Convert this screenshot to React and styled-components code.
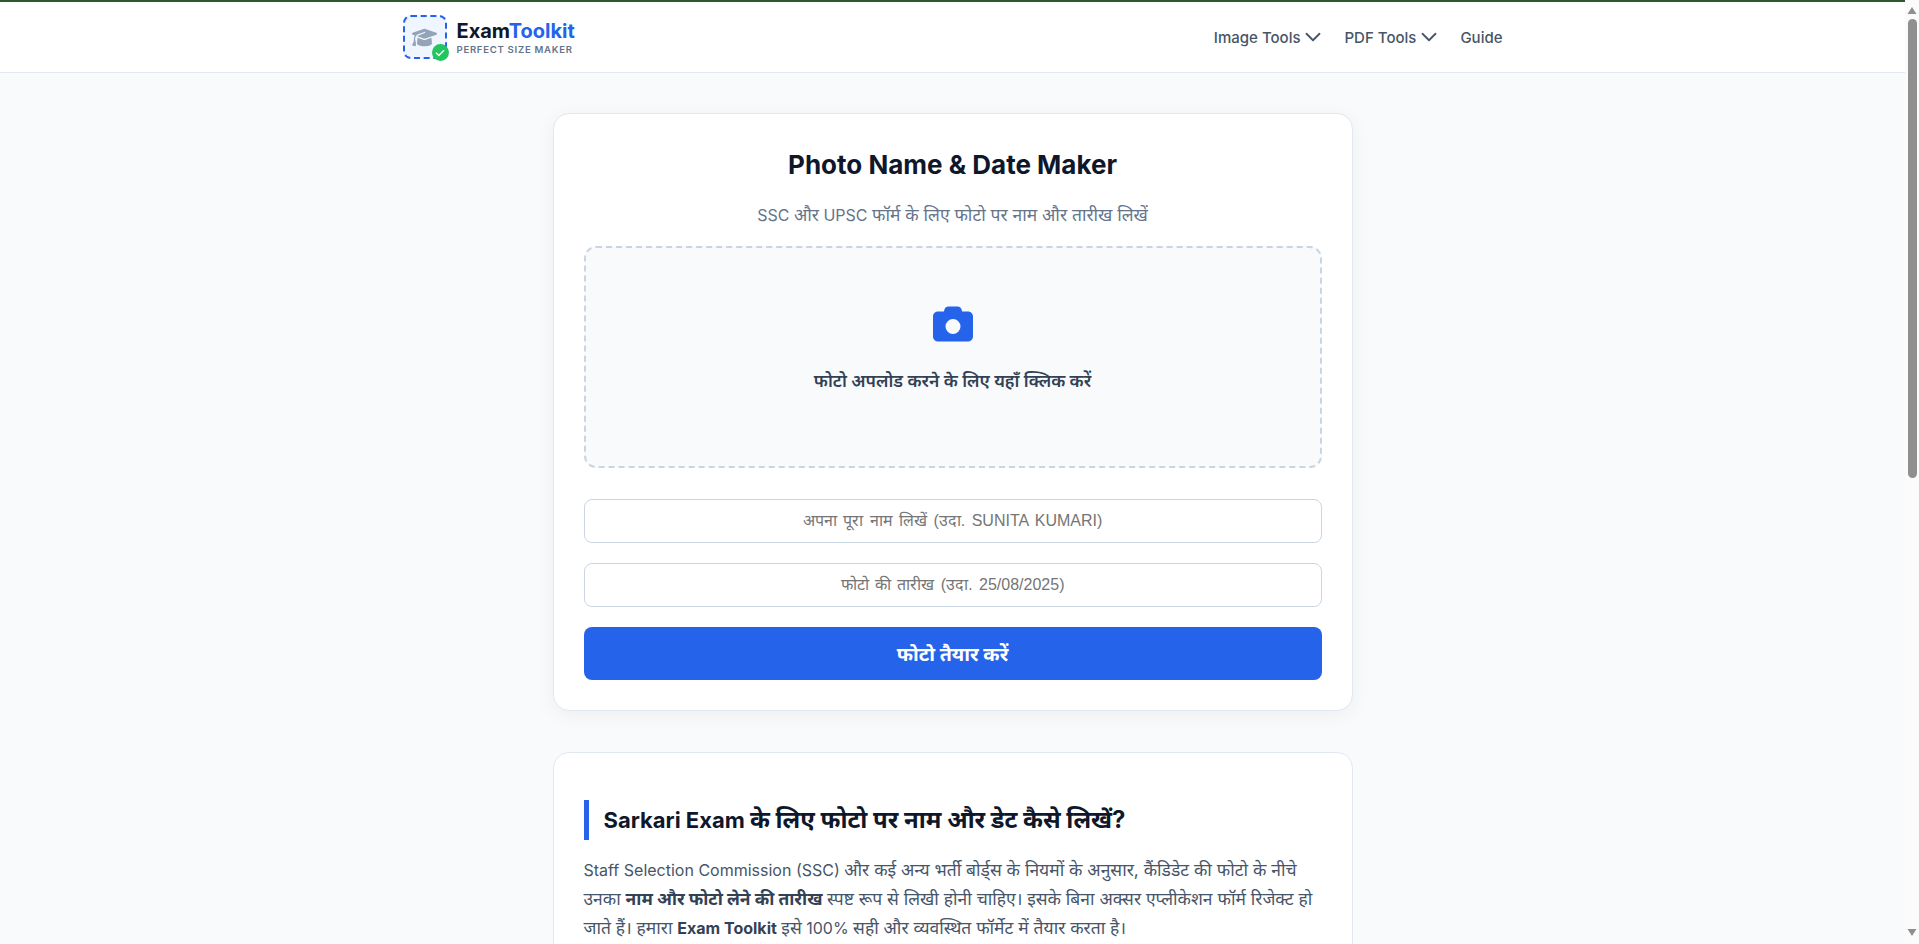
import React from "react";
import styled, { createGlobalStyle } from "styled-components";
import { FaCamera, FaCheck, FaGraduationCap } from "react-icons/fa6";
import { ChevronDown } from "lucide-react";

const GlobalStyle = createGlobalStyle`
  * { box-sizing: border-box; }
  body {
    margin: 0;
    padding-right: 14px;
    background: #f8fafc;
    font-family: Inter, "Noto Sans", sans-serif;
    color: #334155;
  }
`;

const App = () => {
  return (
    <>
      <GlobalStyle />
      <Header>
        <HeaderInner>
          <Brand>
            <LogoBox>
              <FaGraduationCap size={25} color="#94a3b8" />
              <LogoBadge>
                <FaCheck size={10} color="#fff" />
              </LogoBadge>
            </LogoBox>
            <BrandText>
              <BrandName>
                Exam<span>Toolkit</span>
              </BrandName>
              <BrandTag>PERFECT SIZE MAKER</BrandTag>
            </BrandText>
          </Brand>
          <Nav>
            <NavItem>
              Image Tools
              <NavChevron size={26} strokeWidth={1.7} />
            </NavItem>
            <NavItem>
              PDF Tools
              <NavChevron size={26} strokeWidth={1.7} />
            </NavItem>
            <NavItem>Guide</NavItem>
          </Nav>
        </HeaderInner>
      </Header>

      <Main>
        <ToolCard>
          <Title>Photo Name &amp; Date Maker</Title>
          <Subtitle>
            SSC <Hi>और</Hi> UPSC <Hi>फॉर्म के लिए फोटो पर नाम और तारीख लिखें</Hi>
          </Subtitle>
          <DropZone>
            <FaCamera size={40} color="#2563eb" />
            <DropLabel>
              <Hi>फोटो अपलोड करने के लिए यहाँ क्लिक करें</Hi>
            </DropLabel>
          </DropZone>
          <TextInput placeholder="अपना पूरा नाम लिखें (उदा. SUNITA KUMARI)" />
          <TextInput placeholder="फोटो की तारीख (उदा. 25/08/2025)" />
          <Submit>
            <Hi>फोटो तैयार करें</Hi>
          </Submit>
        </ToolCard>

        <ArticleCard>
          <ArticleHeading>
            Sarkari Exam <Hi>के लिए फोटो पर नाम और डेट कैसे लिखें?</Hi>
          </ArticleHeading>
          <Paragraph>
            Staff Selection Commission (SSC){" "}
            <Hi>और कई अन्य भर्ती बोर्ड्स के नियमों के अनुसार, कैंडिडेट की फोटो के नीचे उनका </Hi>
            <strong>
              <Hi>नाम और फोटो लेने की तारीख</Hi>
            </strong>{" "}
            <Hi>स्पष्ट रूप से लिखी होनी चाहिए। इसके बिना अक्सर एप्लीकेशन फॉर्म रिजेक्ट हो जाते हैं। हमारा </Hi>
            <strong>Exam Toolkit</strong> <Hi>इसे</Hi> 100%{" "}
            <Hi>सही और व्यवस्थित फॉर्मेट में तैयार करता है।</Hi>
          </Paragraph>
        </ArticleCard>
      </Main>

      <ScrollBar>
        <svg width="14" height="17" viewBox="0 0 14 17">
          <polygon points="2.5,14 11.5,14 7,7" fill="#8f8f8f" />
        </svg>
        <ScrollThumb />
        <svg width="14" height="17" viewBox="0 0 14 17">
          <polygon points="2.5,2 11.5,2 7,9" fill="#8f8f8f" />
        </svg>
      </ScrollBar>
    </>
  );
};

export default App;

// Devanagari falls back to a smaller face here, so it gets bumped on its own
const Hi = styled.span`
  font-size: 1.09em;
`;

// the browser runs without scrollbars, so this one sits over the page edge
const ScrollBar = styled.div`
  position: fixed;
  top: 0;
  right: 0;
  width: 14px;
  height: 100vh;
  background: #fbfbfb;
  display: flex;
  flex-direction: column;
  justify-content: space-between;
  align-items: center;
`;

const ScrollThumb = styled.div`
  width: 9px;
  height: 459px;
  margin: 2px 0 auto;
  border-radius: 5px;
  background: #8f8f8f;
`;

const Header = styled.header`
  height: 73px;
  background: #fff;
  border-top: 2px solid #2d5a2d;
  border-bottom: 1px solid #e2e8f0;
`;

const HeaderInner = styled.div`
  width: 1100px;
  height: 100%;
  margin: 0 auto;
  display: flex;
  align-items: center;
  justify-content: space-between;
`;

const Brand = styled.div`
  display: flex;
  align-items: center;
  gap: 10px;
`;

const LogoBox = styled.div`
  position: relative;
  width: 44px;
  height: 44px;
  border: 2px dashed #2563eb;
  border-radius: 8px;
  background: #eff6ff;
  display: flex;
  align-items: center;
  justify-content: center;
`;

const LogoBadge = styled.span`
  position: absolute;
  right: -4px;
  bottom: -4px;
  width: 17px;
  height: 17px;
  border-radius: 50%;
  background: #22c55e;
  display: flex;
  align-items: center;
  justify-content: center;
`;

const BrandText = styled.div`
  display: flex;
  flex-direction: column;
`;

const BrandName = styled.div`
  font-size: 20px;
  font-weight: 700;
  line-height: 24px;
  color: #0f172a;
  span {
    color: #2563eb;
  }
`;

const BrandTag = styled.div`
  font-size: 9.6px;
  font-weight: 600;
  line-height: 13px;
  letter-spacing: 0.7px;
  color: #64748b;
`;

const Nav = styled.nav`
  display: flex;
  align-items: center;
  gap: 19px;
`;

const NavItem = styled.a`
  display: flex;
  align-items: center;
  font-size: 15px;
  font-weight: 500;
  color: #475569;
`;

const NavChevron = styled(ChevronDown)`
  margin: 0 -0.5px;
`;

const Main = styled.main`
  width: 800px;
  margin: 0 auto;
  padding-top: 40px;
`;

const Card = styled.section`
  background: #fff;
  border: 1px solid #e2e8f0;
  border-radius: 16px;
  padding: 30px;
`;

const ToolCard = styled(Card)`
  height: 598px;
  padding-top: 35px;
  box-shadow: 0 4px 20px rgba(0, 0, 0, 0.05);
  display: flex;
  flex-direction: column;
`;

const Title = styled.h1`
  margin: 0;
  font-size: 26px;
  font-weight: 700;
  line-height: 32px;
  text-align: center;
  color: #0f172a;
`;

const Subtitle = styled.p`
  margin: 22px 0 19px;
  font-size: 16px;
  line-height: 24px;
  text-align: center;
  color: #64748b;
`;

const DropZone = styled.div`
  height: 224px;
  margin-bottom: 31px;
  border: 2px dashed #cbd5e1;
  border-radius: 12px;
  background: #f8fafc;
  display: flex;
  flex-direction: column;
  align-items: center;
  padding-top: 56px;
`;

const DropLabel = styled.div`
  margin-top: 25px;
  font-size: 16px;
  font-weight: 600;
  line-height: 24px;
  color: #334155;
`;

const TextInput = styled.input`
  display: block;
  flex: none;
  width: 100%;
  height: 44px;
  margin-bottom: 20px;
  border: 1px solid #cbd5e1;
  border-radius: 8px;
  background: #fff;
  font-family: "Liberation Sans", Arial, sans-serif;
  font-size: 16px;
  word-spacing: 2px;
  text-align: center;
`;

const Submit = styled.button`
  width: 100%;
  height: 54px;
  border: none;
  border-radius: 8px;
  background: #2563eb;
  color: #fff;
  font-family: Inter, "Noto Sans", sans-serif;
  font-size: 18px;
  font-weight: 700;
`;

const ArticleCard = styled(Card)`
  margin: 41px 0 40px;
  min-height: 1000px;
  padding-top: 47px;
`;

const ArticleHeading = styled.h2`
  margin: 0 0 16px;
  padding-left: 15px;
  border-left: 5px solid #2563eb;
  font-size: 22px;
  font-weight: 700;
  line-height: 39px;
  color: #0f172a;
`;

const Paragraph = styled.p`
  margin: 0;
  font-size: 16px;
  line-height: 28.8px;
  color: #475569;
  strong {
    color: #334155;
  }
`;
